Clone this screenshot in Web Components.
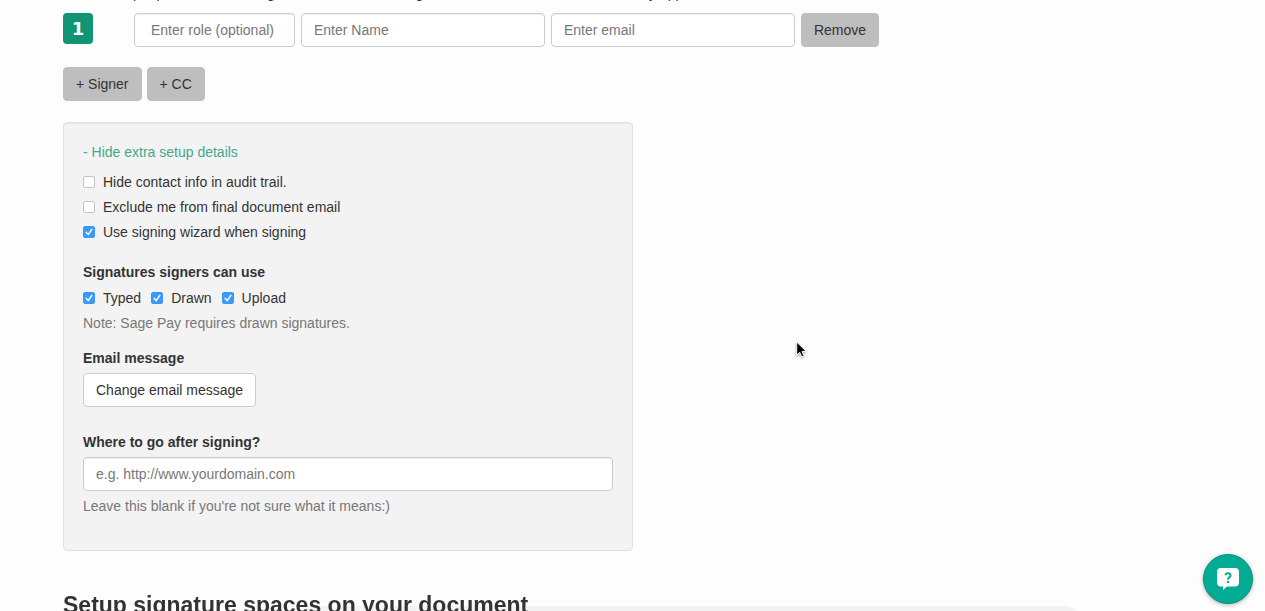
<!DOCTYPE html>
<html lang="en">
<head>
<meta charset="utf-8">
<title>Document setup</title>
<style>
  html {
    height: 100%;
    overflow: hidden;
  }
  body {
    margin: 0;
    height: 100%;
    overflow: hidden;
    background-color: #fdfdfd;
    color: #333333;
    font: 14px/20px "Liberation Sans", Arial, sans-serif;
  }
</style>
</head>
<body>
<setup-page></setup-page>
<help-launcher></help-launcher>
<mouse-pointer></mouse-pointer>

<script>
class SetupElement extends HTMLElement {
  constructor() {
    super();
    const template = document.createElement("template");
    template.innerHTML = this.constructor.markup;
    this.attachShadow({ mode: "open" });
    this.shadowRoot.appendChild(template.content.cloneNode(true));
  }
}

class SetupButton extends SetupElement {
  static get markup() {
    return `
      <style>
        :host {
          display: inline-block;
        }
        button {
          display: block;
          height: 34px;
          padding: 0 12px;
          border: 1px solid #bebebe;
          border-radius: 4px;
          background-color: #bebebe;
          color: #333333;
          font: inherit;
          white-space: nowrap;
          cursor: pointer;
        }
        :host([plain]) button {
          border-color: #cccccc;
          background-color: #ffffff;
        }
      </style>
      <button type="button"><slot></slot></button>
    `;
  }
}

class SetupInput extends SetupElement {
  static get markup() {
    return `
      <style>
        :host {
          display: block;
          min-width: 0;
        }
        label {
          display: block;
          font-weight: bold;
          margin-bottom: 5px;
        }
        label[hidden] {
          display: none;
        }
        input {
          display: block;
          box-sizing: border-box;
          width: 100%;
          height: 34px;
          padding: 0 12px;
          border: 1px solid #cccccc;
          border-radius: 4px;
          background-color: #ffffff;
          box-shadow: inset 0 1px 1px rgba(0, 0, 0, 0.07);
          color: #555555;
          font: inherit;
        }
        :host([inset]) input {
          padding: 0 16px;
        }
        input::placeholder {
          color: #777777;
          opacity: 1;
        }
      </style>
      <label for="field" hidden></label>
      <input id="field" type="text">
    `;
  }

  connectedCallback() {
    const input = this.shadowRoot.querySelector("input");
    const label = this.shadowRoot.querySelector("label");
    input.placeholder = this.getAttribute("placeholder") || "";
    if (this.hasAttribute("label")) {
      label.textContent = this.getAttribute("label");
      label.hidden = false;
    } else {
      input.setAttribute("aria-label", input.placeholder);
    }
  }
}

class SetupCheck extends SetupElement {
  static get markup() {
    return `
      <style>
        :host {
          display: block;
        }
        label {
          display: flex;
          align-items: center;
          gap: 8px;
        }
        .box {
          display: grid;
          flex: none;
        }
        input, svg {
          grid-area: 1 / 1;
        }
        input {
          appearance: none;
          box-sizing: border-box;
          width: 12px;
          height: 12px;
          margin: 0;
          border: 1px solid #c4c4c4;
          border-radius: 2px;
          background-color: #ffffff;
        }
        input:checked {
          border-color: #3b95f9;
          background-color: #3b99fc;
        }
        svg {
          display: none;
          pointer-events: none;
        }
        input:checked + svg {
          display: block;
        }
      </style>
      <label>
        <span class="box">
          <input type="checkbox">
          <svg width="12" height="12" viewBox="0 0 12 12" fill="none" stroke="#ffffff" stroke-width="1.5" stroke-linecap="round" stroke-linejoin="round">
            <path d="M3.2 6.4 5.2 8.6 8.8 3.4"/>
          </svg>
        </span>
        <span><slot></slot></span>
      </label>
    `;
  }

  connectedCallback() {
    this.shadowRoot.querySelector("input").checked = this.hasAttribute("checked");
  }
}

class SignerRow extends SetupElement {
  static get markup() {
    return `
      <style>
        :host {
          display: flex;
          gap: 6px;
          max-width: 816px;
        }
        .number {
          flex: none;
          width: 30px;
          height: 31px;
          margin-right: 35px;
          border-radius: 4px;
          background-color: #119472;
          color: #ffffff;
          font: bold 18px/32px "DejaVu Sans", sans-serif;
          text-align: center;
        }
        setup-input {
          flex: 50;
        }
        setup-input[inset] {
          flex: 33;
        }
      </style>
      <div class="number"><slot></slot></div>
      <setup-input inset placeholder="Enter role (optional)"></setup-input>
      <setup-input placeholder="Enter Name"></setup-input>
      <setup-input placeholder="Enter email"></setup-input>
      <setup-button>Remove</setup-button>
    `;
  }
}

class ExtraDetails extends SetupElement {
  static get markup() {
    return `
      <style>
        :host {
          display: block;
          box-sizing: border-box;
          width: 50%;
          padding: 19px 19px 34px;
          border: 1px solid #e0e0e0;
          border-radius: 4px;
          background-color: #f3f3f3;
          box-shadow: inset 0 1px 1px rgba(0, 0, 0, 0.05);
        }
        a {
          color: #45a88d;
          text-decoration: none;
        }
        h4, p {
          margin: 0;
          font-size: inherit;
        }
        .options {
          display: grid;
          gap: 5px;
          margin: 10px 0 20px;
        }
        .types {
          display: flex;
          gap: 10px;
          margin: 6px 0 5px;
        }
        .help {
          color: #777777;
        }
        .email {
          margin: 15px 0 25px;
        }
        .email h4, setup-input {
          margin-bottom: 5px;
        }
      </style>
      <a href="#">- Hide extra setup details</a>
      <div class="options">
        <setup-check>Hide contact info in audit trail.</setup-check>
        <setup-check>Exclude me from final document email</setup-check>
        <setup-check checked>Use signing wizard when signing</setup-check>
      </div>
      <h4>Signatures signers can use</h4>
      <div class="types">
        <setup-check checked>Typed</setup-check>
        <setup-check checked>Drawn</setup-check>
        <setup-check checked>Upload</setup-check>
      </div>
      <p class="help">Note: Sage Pay requires drawn signatures.</p>
      <div class="email">
        <h4>Email message</h4>
        <setup-button plain>Change email message</setup-button>
      </div>
      <setup-input label="Where to go after signing?" placeholder="e.g. http://www.yourdomain.com"></setup-input>
      <p class="help">Leave this blank if you're not sure what it means:)</p>
    `;
  }
}

class SetupPage extends SetupElement {
  static get markup() {
    return `
      <style>
        :host {
          display: flow-root;
          padding: 0 62px 0 63px;
        }
        /* the page is scrolled past its intro line */
        .intro {
          margin: -17px 0 10px;
        }
        .add {
          display: flex;
          gap: 5px;
          margin: 20px 0 21px;
        }
        h3 {
          position: relative;
          margin: 40px 0 0;
          font-size: 23px;
          font-weight: bold;
          line-height: 28px;
        }
        /* toolbar that floats over the document below */
        .toolbar {
          position: fixed;
          bottom: -45px;
          left: 23%;
          right: 14%;
          height: 50px;
          border-radius: 25px;
          background-color: #f3f3f3;
        }
      </style>
      <p class="intro">Add all the people that need to sign the document to assign the roles and set the fields that may appear</p>
      <signer-row>1</signer-row>
      <div class="add">
        <setup-button>+ Signer</setup-button>
        <setup-button>+ CC</setup-button>
      </div>
      <extra-details></extra-details>
      <div class="toolbar"></div>
      <h3>Setup signature spaces on your document</h3>
    `;
  }
}

class HelpLauncher extends SetupElement {
  static get markup() {
    return `
      <style>
        :host {
          position: fixed;
          right: 12px;
          bottom: 7px;
        }
        button {
          display: grid;
          place-items: center;
          width: 50px;
          height: 50px;
          padding: 0;
          border: 1px solid #078f7c;
          border-radius: 50%;
          background-color: #03ab95;
          box-shadow: 0 1px 4px rgba(0, 0, 0, 0.3);
          cursor: pointer;
        }
      </style>
      <button type="button" aria-label="Help">
        <svg width="22" height="22" viewBox="0 0 22 22">
          <path fill="#ffffff" d="M4 0h14a4 4 0 0 1 4 4v10.500a4 4 0 0 1-4 4h-8L6 22v-3.500H4a4 4 0 0 1-4-4V4a4 4 0 0 1 4-4z"/>
          <path fill="none" stroke="#03ab95" stroke-width="2" d="M8.500 7.300C8.700 4.500 13.500 4.700 13.500 7.400C13.500 9.300 11 9.200 11 11.800"/>
          <path fill="#03ab95" d="M10 13h2v2h-2z"/>
        </svg>
      </button>
    `;
  }
}

class MousePointer extends SetupElement {
  static get markup() {
    return `
      <style>
        :host {
          position: absolute;
          left: 796px;
          top: 341px;
          pointer-events: none;
        }
        svg {
          display: block;
          filter: drop-shadow(0 1px 1px rgba(0, 0, 0, 0.35));
        }
      </style>
      <svg width="12" height="18" viewBox="0 0 12 18">
        <path fill="#000000" stroke="#ffffff" d="M.7 1v13.200l3-2.900 2 4.600 2.300-1-2-4.500h4.200z"/>
      </svg>
    `;
  }
}

customElements.define("setup-button", SetupButton);
customElements.define("setup-input", SetupInput);
customElements.define("setup-check", SetupCheck);
customElements.define("signer-row", SignerRow);
customElements.define("extra-details", ExtraDetails);
customElements.define("setup-page", SetupPage);
customElements.define("help-launcher", HelpLauncher);
customElements.define("mouse-pointer", MousePointer);
</script>
</body>
</html>
